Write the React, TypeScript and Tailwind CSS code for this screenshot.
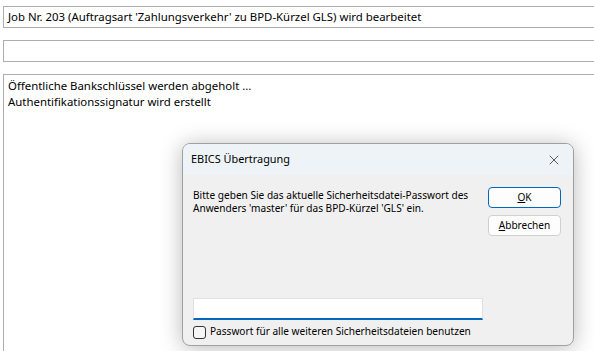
import { X } from "lucide-react";

export default function App() {
  return (
    <div className="relative w-[594px] h-[351px] overflow-hidden bg-white font-['Segoe_UI','Noto_Sans',sans-serif] text-[11.4px] text-black">
      {/* Statuszeilen im Hintergrund */}
      <div className="flex flex-col pt-[6px] pl-[3px]">
        <div className="h-[22px] border border-r-0 border-[#adadad] pl-[4px] flex items-center leading-none whitespace-nowrap">
          Job Nr. 203 (Auftragsart 'Zahlungsverkehr' zu BPD-Kürzel GLS) wird bearbeitet
        </div>
        <div className="mt-[12px] h-[22px] border border-r-0 border-[#adadad]"></div>
        <div className="mt-[12px] h-[300px] border border-r-0 border-[#adadad] pl-[4px] pt-[3px] leading-[16px]">
          <div>Öffentliche Bankschlüssel werden abgeholt ...</div>
          <div>Authentifikationssignatur wird erstellt</div>
        </div>
      </div>

      {/* Passwort-Dialog */}
      <div className="absolute left-[182px] top-[143px] w-[392px] h-[203px] rounded-[8px] border border-[#a0a0a0] bg-[#f0f0f0] shadow-[0_2px_22px_rgba(0,0,0,0.28)] overflow-hidden flex flex-col">
        <div className="h-[31px] bg-[#eef3f8] flex items-center justify-between pl-[8px] pr-[11px] text-[10.9px]">
          <span>EBICS Übertragung</span>
          <X size={16} strokeWidth={1.1} className="text-[#222]" />
        </div>
        <div className="flex flex-1 pl-[10px] pr-[12px] pt-[12px] text-[10.1px]">
          <div className="w-[290px] flex flex-col">
            <p className="leading-[13px] pt-[2px] whitespace-nowrap">
              Bitte geben Sie das aktuelle Sicherheitsdatei-Passwort des
              <br />
              Anwenders 'master' für das BPD-Kürzel 'GLS' ein.
            </p>
            <div className="mt-auto w-[290px] h-[22px] bg-white border border-[#e0e0e0] border-b-2 border-b-[#0067c0]"></div>
            <label className="flex items-center gap-[4px] mt-[5px] mb-[6px] h-[14px] whitespace-nowrap">
              <span className="shrink-0 w-[13px] h-[13px] rounded-[3px] border border-[#333] bg-[#f6f6f6]"></span>
              <span>Passwort für alle weiteren Sicherheitsdateien benutzen</span>
            </label>
          </div>
          <div className="ml-auto flex flex-col gap-[7px]">
            <button className="w-[73px] h-[21px] rounded-[4px] border border-[#0067c0] bg-[#fdfdfd] flex items-center justify-center leading-none">
              <span><span className="underline">O</span>K</span>
            </button>
            <button className="w-[73px] h-[21px] rounded-[4px] border border-[#d0d0d0] bg-[#fdfdfd] flex items-center justify-center leading-none">
              <span><span className="underline">A</span>bbrechen</span>
            </button>
          </div>
        </div>
      </div>
    </div>
  );
}
